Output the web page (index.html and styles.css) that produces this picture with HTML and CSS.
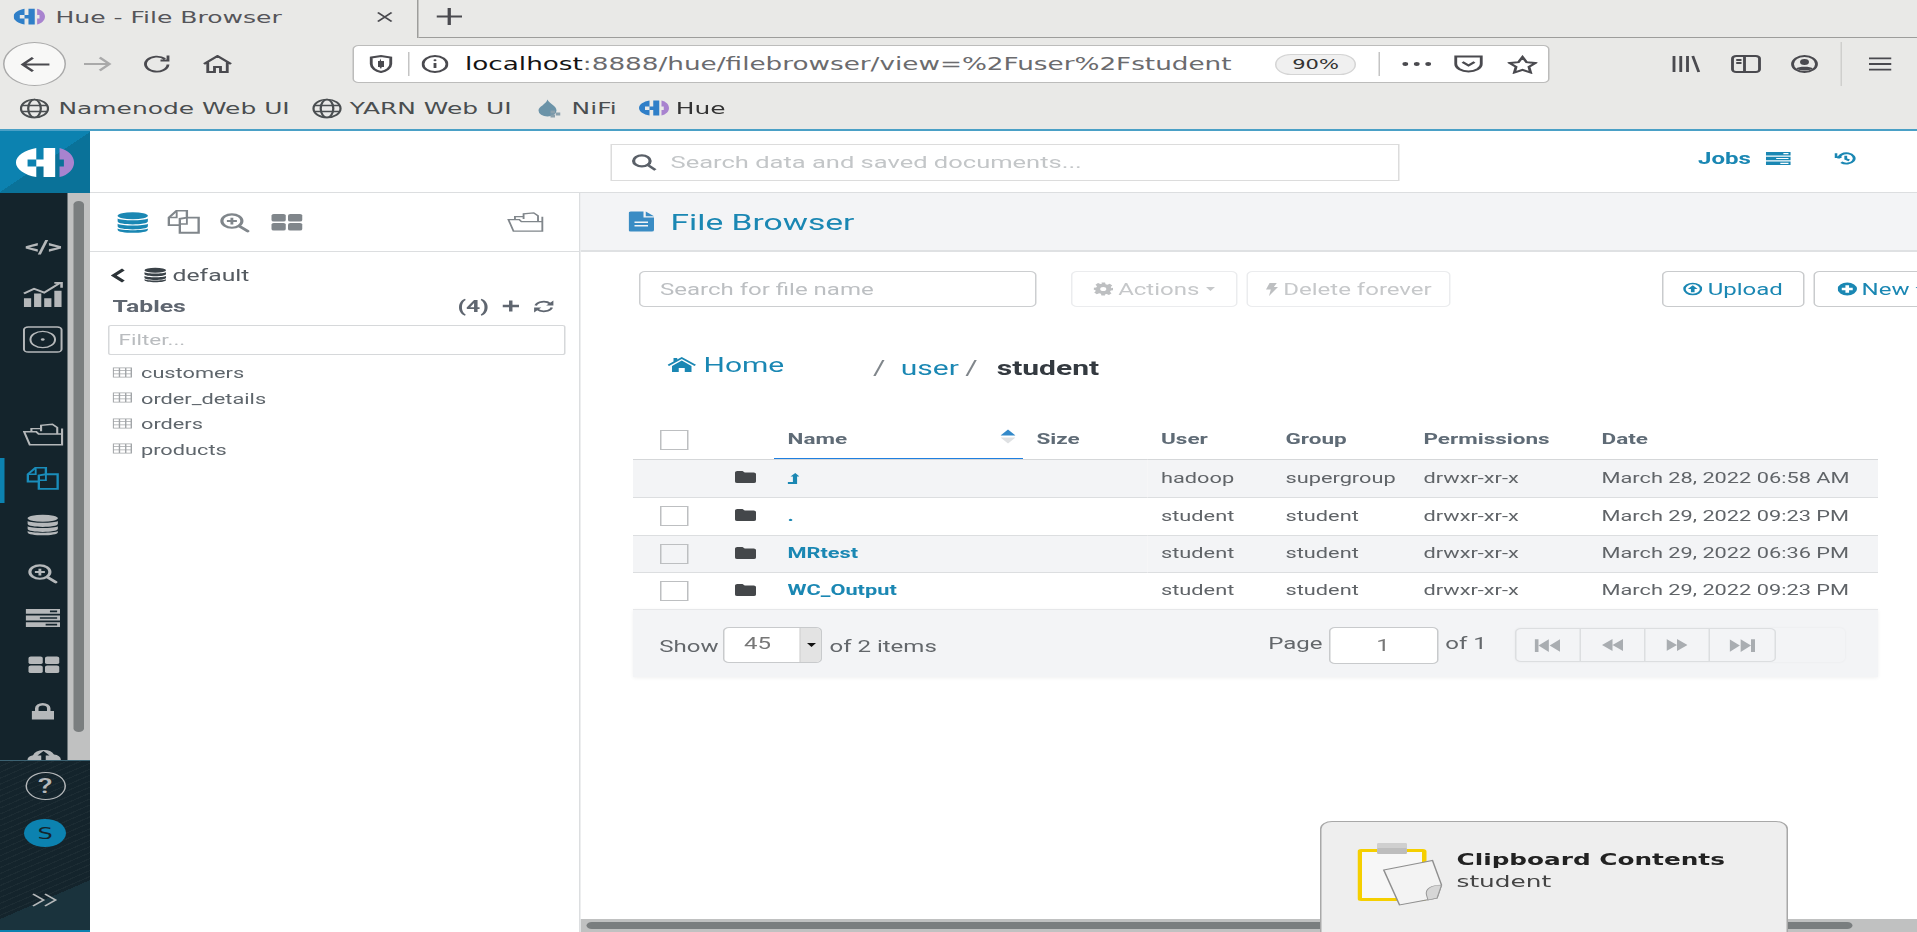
FILE: index.html
```html
<!DOCTYPE html>
<html lang="en">
<head>
  <meta charset="UTF-8">
  <title>Hue - File Browser</title>
  <link rel="stylesheet" href="styles.css">
</head>
<body>

  <svg class="defs" aria-hidden="true">
    <symbol id="i-hue" viewBox="0 0 40 32">
      <path class="hue-a" d="M14 1C6 3 0 9 0 16s6 13 14 15V20H8v-7h6zM19 1h8v30h-8V20h-5v-7h5z"/>
      <path class="hue-b" d="M30 1c6 2 10 8 10 15s-4 13-10 15V20h3v-7h-3z"/>
    </symbol>
    <symbol id="i-db" viewBox="0 0 20 20">
      <ellipse cx="10" cy="3.6" rx="9.6" ry="3.4" fill="currentColor"/>
      <path fill="currentColor" d="M.4 6.2c2 2.2 17.200 2.200 19.200 0v2.600c0 4-19.200 4-19.200 0zM.4 11.200c2 2.200 17.200 2.200 19.200 0v2.400c0 4-19.200 4-19.200 0zM.4 15.800c2 2.200 17.200 2.200 19.200 0v1c0 4-19.200 4-19.200 0z"/>
    </symbol>
    <symbol id="i-docs" viewBox="0 1 22 19" preserveAspectRatio="none">
      <path fill="none" stroke="currentColor" stroke-width="1.500" d="M8 13H1.500V7L6.500 1.500H13V7M8.500 13V8L13 7H20.500V19H8.500z"/>
      <path fill="none" stroke="currentColor" stroke-width="1.200" d="M6.500 2v5H1.500M13 7v5H8.500"/>
    </symbol>
    <symbol id="i-zoom" viewBox="0 0 22 20">
      <circle cx="9" cy="8.500" r="7" fill="none" stroke="currentColor" stroke-width="2.200"/>
      <path fill="none" stroke="currentColor" stroke-width="2" d="M5.500 8.500h7M9 5v7"/>
      <path fill="none" stroke="currentColor" stroke-width="2.600" stroke-linecap="round" d="M14.500 14l5.500 5"/>
    </symbol>
    <symbol id="i-grid" viewBox="0 0 22 18">
      <rect x="1" y="1" width="9.500" height="7.500" rx="1.500" fill="currentColor"/>
      <rect x="12" y="1" width="9.500" height="7.500" rx="1.500" fill="currentColor"/>
      <rect x="1" y="10" width="9.500" height="7.500" rx="1.500" fill="currentColor"/>
      <rect x="12" y="10" width="9.500" height="7.500" rx="1.500" fill="currentColor"/>
    </symbol>
    <symbol id="i-folders" viewBox="0 0 26 22">
      <path fill="none" stroke="currentColor" stroke-width="1.300" d="M4.500 20.500L1 8.500h7.500l1.500 2h14.500v10zM5.500 8V5.500h6V8M11.500 8V2.500l7-1 3 3V10M24.500 10V5.500"/>
    </symbol>
    <symbol id="i-chart" viewBox="0 0 28 28">
      <path fill="none" stroke="currentColor" stroke-width="1.800" d="M1 13l7-5 7 4L26 2M22 2h5v5"/>
      <path fill="currentColor" d="M1 18h5v9H1zM8 13h5v14H8zM15 18h5v9h-5zM22 10h5v17h-5z"/>
    </symbol>
    <symbol id="i-disc" viewBox="0 0 28 28">
      <rect x="1" y="1" width="26" height="26" rx="3" fill="none" stroke="currentColor" stroke-width="1.400"/>
      <circle cx="14" cy="14" r="8.500" fill="none" stroke="currentColor" stroke-width="1.400"/>
      <circle cx="14" cy="14" r="1.300" fill="currentColor"/>
    </symbol>
    <symbol id="i-jobs" viewBox="0 0 24 19">
      <path fill="currentColor" fill-rule="evenodd" d="M0 0h24v5H0zM17 1.600v1.800h5V1.600zM0 7h24v5H0zM10 8.600v1.800h12V8.600zM0 14h24v5H0zM14 15.600v1.800h8v-1.800z"/>
    </symbol>
    <symbol id="i-lock" viewBox="0 0 16 18">
      <path fill="currentColor" d="M0 9h2.500V6a5.500 5.500 0 0 1 11 0v3H16v9H0zM5 9h6V6a3 3 0 0 0-6 0z"/>
    </symbol>
    <symbol id="i-cloud" viewBox="0 0 24 18">
      <path fill="currentColor" fill-rule="evenodd" d="M6 17a5 5 0 0 1-1-9.800A7.500 7.500 0 0 1 19 6.500 5.300 5.300 0 0 1 19 17zM12 3L8 7.500h2.500V12h3V7.500H16z"/>
    </symbol>
    <symbol id="i-file" viewBox="0 0 17 20">
      <path fill="currentColor" d="M0 1.500A1.500 1.500 0 0 1 1.500 0H10v6h7v12.500a1.500 1.500 0 0 1-1.500 1.500h-14A1.500 1.500 0 0 1 0 18.500zM11.500 0L17 4.800h-5.500zM4 10v1.500h9V10zM4 13.500V15h9v-1.500z" fill-rule="evenodd"/>
    </symbol>
    <symbol id="i-home" viewBox="0 0 19 15">
      <path fill="currentColor" d="M9.500 0l9.500 7.800-1 1.200-8.500-7L1 9 0 7.800 4 4.500V1h2.500v1.500zM3 9l6.500-5.500L16 9v6h-4.500v-4h-4v4H3z"/>
    </symbol>
    <symbol id="i-gear" viewBox="0 0 16 16">
      <path fill="currentColor" fill-rule="evenodd" d="M6.500 0h3l.4 2.200 1.500.7 1.900-1.300 2.100 2.100-1.300 1.900.7 1.500L16 6.500v3l-1.800.4-.7 1.500 1.300 1.900-2.100 2.100-1.900-1.300-1.500.7L9.500 16h-3l-.4-2.100-1.500-.7-1.900 1.300-2.100-2.100 1.300-1.900-.7-1.500L0 9.500v-3l2.200-.4.700-1.500L1.600 2.700l2.100-2.100 1.900 1.300 1.500-.7zM8 5.500a2.500 2.500 0 1 0 0 5 2.500 2.500 0 0 0 0-5z"/>
    </symbol>
    <symbol id="i-bolt" viewBox="0 0 10 16">
      <path fill="currentColor" d="M3 0h6L6.500 5H10L2.500 16l1.500-8H0z"/>
    </symbol>
    <symbol id="i-upload" viewBox="0 0 16 16">
      <circle cx="8" cy="8" r="6.800" fill="none" stroke="currentColor" stroke-width="2"/>
      <path fill="currentColor" d="M8 3.500L12 8H9.500v4h-3V8H4z"/>
    </symbol>
    <symbol id="i-plus" viewBox="0 0 16 16">
      <path fill="currentColor" fill-rule="evenodd" d="M8 0a8 8 0 1 1 0 16A8 8 0 0 1 8 0zM6.500 3.500V6.500h-3v3h3v3h3v-3h3v-3h-3v-3z"/>
    </symbol>
    <symbol id="i-folder" viewBox="0 0 14 12">
      <path fill="currentColor" d="M0 1.500A1.500 1.500 0 0 1 1.500 0h3.500l1.500 1.500h6A1.500 1.500 0 0 1 14 3v7.500a1.500 1.500 0 0 1-1.500 1.500h-11A1.500 1.500 0 0 1 0 10.500z"/>
    </symbol>
    <symbol id="i-up" viewBox="0 0 10 14">
      <path fill="currentColor" d="M6.500 0L10 4.500H8V14H0v-2.500h4.500v-7h-2z"/>
    </symbol>
    <symbol id="i-first" viewBox="0 0 16 12">
      <path fill="currentColor" d="M0 0h2.500v12H0zM9 0v12L2.500 6zM16 0v12L9.500 6z"/>
    </symbol>
    <symbol id="i-prev" viewBox="0 0 14 12">
      <path fill="currentColor" d="M7 0v12L0 6zM14 0v12L7 6z"/>
    </symbol>
    <symbol id="i-next" viewBox="0 0 14 12">
      <path fill="currentColor" d="M0 0v12l7-6zM7 0v12l7-6z"/>
    </symbol>
    <symbol id="i-last" viewBox="0 0 16 12">
      <path fill="currentColor" d="M0 0v12l6.500-6zM7 0v12l6.500-6zM13.500 0H16v12h-2.500z"/>
    </symbol>
    <symbol id="i-globe" viewBox="0 0 20 20">
      <g fill="none" stroke="currentColor" stroke-width="1.500">
        <circle cx="10" cy="10" r="9"/>
        <ellipse cx="10" cy="10" rx="4.200" ry="9"/>
        <path d="M1.500 7h17M1.500 13h17"/>
      </g>
    </symbol>
    <symbol id="i-table" viewBox="0 0 14 11">
      <path fill="none" stroke="currentColor" d="M.5.500h13v10H.5zM.5 3.500h13M.5 7h13M5 .5v10M9.500.5v10"/>
    </symbol>
  </svg>

  <div class="screen">

    <!-- browser chrome -->
    <div class="tabstrip">
      <div class="tab">
        <svg class="tab-icon"><use href="#i-hue"/></svg>
        <span class="tab-title">Hue - File Browser</span>
        <svg class="tab-close" viewBox="0 0 12 12"><path d="M1 1l10 10M11 1L1 11"/></svg>
      </div>
      <svg class="tab-new" viewBox="0 0 14 14"><path d="M7 0v14M0 7h14"/></svg>
    </div>

    <div class="navbar">
      <div class="nav-back">
        <svg viewBox="0 0 20 16"><path d="M19 8H2M8.500 1.500L2 8l6.500 6.500"/></svg>
      </div>
      <svg class="nav-btn nav-forward" viewBox="0 0 20 16"><path d="M1 8h17M11.500 1.500L18 8l-6.500 6.500"/></svg>
      <svg class="nav-btn nav-reload" viewBox="0 0 20 18"><path d="M17 9.500A7.500 7.500 0 1 1 15 4M17 .5v5h-5"/></svg>
      <svg class="nav-btn nav-home" viewBox="0 0 20 18"><path d="M1 9l9-8 9 8M3.500 7.500V17h4.500v-5h4v5h4.500V7.500"/></svg>

      <div class="urlbar">
        <svg class="url-shield" viewBox="0 0 16 18"><path d="M1.500 2.500L8 1l6.500 1.500V9c0 4-3 7-6.500 8-3.500-1-6.500-4-6.500-8z"/><path class="solid" d="M8 3.500v5h-1V6zM6 6h4v6H8.500l-.5 2-1-2H6z"/></svg>
        <span class="url-sep"></span>
        <svg class="url-info" viewBox="0 0 18 18"><circle cx="9" cy="9" r="8"/><path d="M9 8v5"/><circle class="solid" cx="9" cy="5.200" r="1"/></svg>
        <div class="url-text"><span class="url-host">localhost</span>:8888/hue/filebrowser/view=%2Fuser%2Fstudent</div>
        <span class="url-zoom">90%</span>
        <span class="url-sep url-sep-right"></span>
        <svg class="url-dots" viewBox="0 0 22 6"><circle cx="3" cy="3" r="2"/><circle cx="11" cy="3" r="2"/><circle cx="19" cy="3" r="2"/></svg>
        <svg class="url-pocket" viewBox="0 0 20 18"><path d="M1.500 1.500h17V9a8.500 7.500 0 0 1-17 0z"/><path d="M6 7l4 3.500L14 7"/></svg>
        <svg class="url-star" viewBox="0 0 20 18"><path d="M10 1.500l2.700 5.200 6 .8-4.400 3.900 1.100 5.600L10 14.300 4.600 17l1.100-5.600L1.300 7.500l6-.8z"/></svg>
      </div>

      <svg class="nav-btn nav-library" viewBox="0 0 20 18"><path d="M2 1v16M6.500 1v16M11 1v16M14.500 1l4 16"/></svg>
      <svg class="nav-btn nav-side" viewBox="0 0 20 18"><rect x="1" y="1" width="18" height="16" rx="2.500"/><path d="M9 1v16M3.500 5H7M3.500 8H7"/></svg>
      <svg class="nav-btn nav-profile" viewBox="0 0 18 18"><circle cx="9" cy="9" r="8"/><circle class="solid" cx="9" cy="7" r="3"/><path class="solid" d="M3.500 13.500c1-2.500 10-2.500 11 0-2 2.500-9 2.500-11 0z"/></svg>
      <span class="nav-sep"></span>
      <svg class="nav-btn nav-menu" viewBox="0 0 16 16"><path d="M0 2h16M0 8h16M0 14h16"/></svg>
    </div>

    <div class="bookmarks">
      <svg class="bm-globe"><use href="#i-globe"/></svg>
      <span class="bm-label bm-name">Namenode Web UI</span>
      <svg class="bm-globe bm-next"><use href="#i-globe"/></svg>
      <span class="bm-label bm-yarn">YARN Web UI</span>
      <svg class="bm-nifi" viewBox="0 0 16 18"><path d="M7 0c1 4 6 6 6 11a6 6 0 0 1-12 0C1 7 6 5 7 0z"/><path class="bm-nifi-sq" d="M9 11h3v3H9zM12.500 13h3v3h-3zM9 15h3v3H9z"/></svg>
      <span class="bm-label bm-nifi-text">NiFi</span>
      <svg class="bm-hue"><use href="#i-hue"/></svg>
      <span class="bm-label bm-hue-text">Hue</span>
    </div>

    <!-- hue app -->
    <div class="app">
      <aside class="rail">
        <div class="rail-logo">
          <svg class="rail-logo-mark"><use href="#i-hue"/></svg>
        </div>
        <div class="rail-middle">
          <div class="rail-icons">
            <span class="rail-code">&lt;/&gt;</span>
            <svg class="ri ri-chart"><use href="#i-chart"/></svg>
            <svg class="ri ri-disc"><use href="#i-disc"/></svg>
            <svg class="ri ri-folders"><use href="#i-folders"/></svg>
            <div class="ri-active"><svg class="ri ri-docs"><use href="#i-docs"/></svg></div>
            <svg class="ri ri-db"><use href="#i-db"/></svg>
            <svg class="ri ri-zoom"><use href="#i-zoom"/></svg>
            <svg class="ri ri-jobs"><use href="#i-jobs"/></svg>
            <svg class="ri ri-grid"><use href="#i-grid"/></svg>
            <svg class="ri ri-lock"><use href="#i-lock"/></svg>
            <svg class="ri ri-cloud"><use href="#i-cloud"/></svg>
          </div>
          <div class="rail-scroll"><div class="rail-thumb"></div></div>
        </div>
        <div class="rail-foot">
          <div class="rail-help">?</div>
          <div class="rail-user">S</div>
          <svg class="rail-expand" viewBox="0 0 18 14"><path d="M1 1l7 6-7 6M9 1l7 6-7 6"/></svg>
        </div>
      </aside>

      <div class="main">
        <header class="topbar">
          <div class="global-search">
            <svg class="global-search-icon" viewBox="0 0 16 16"><circle cx="6.500" cy="6.500" r="5.200"/><path d="M10.500 10.500l4.500 4.500"/></svg>
            <span class="global-search-text">Search data and saved documents...</span>
          </div>
          <span class="jobs-link">Jobs</span>
          <svg class="jobs-icon"><use href="#i-jobs"/></svg>
          <svg class="history-icon" viewBox="0 0 16 16"><path d="M3 8a5.500 5.500 0 1 1 1.800 4M1 2.500v4h4M8 5v3.500l2.500 1.500"/></svg>
        </header>

        <div class="workarea">
          <section class="panel">
            <div class="panel-tabs">
              <svg class="pt pt-db"><use href="#i-db"/></svg>
              <svg class="pt pt-docs"><use href="#i-docs"/></svg>
              <svg class="pt pt-zoom"><use href="#i-zoom"/></svg>
              <svg class="pt pt-grid"><use href="#i-grid"/></svg>
              <svg class="pt pt-folders"><use href="#i-folders"/></svg>
            </div>
            <div class="panel-body">
              <div class="db-line">
                <svg class="db-back" viewBox="0 0 10 14"><path d="M8.500 1.500L2.500 7l6 5.500"/></svg>
                <svg class="db-icon"><use href="#i-db"/></svg>
                <span>default</span>
              </div>
              <div class="tables-head">
                <span class="tables-title">Tables</span>
                <span class="tables-count">(4)</span>
                <svg class="tables-add" viewBox="0 0 12 12"><path d="M6 0v12M0 6h12"/></svg>
                <svg class="tables-refresh" viewBox="0 0 14 12"><path d="M2 5a5 4.500 0 0 1 9-1.500M12 7a5 4.500 0 0 1-9 1.500"/><path class="solid" d="M13 .5V5H8.500zM1 11.500V7h4.500z"/></svg>
              </div>
              <div class="filter">Filter...</div>
              <ul class="table-list">
                <li><svg><use href="#i-table"/></svg>customers</li>
                <li><svg><use href="#i-table"/></svg>order_details</li>
                <li><svg><use href="#i-table"/></svg>orders</li>
                <li><svg><use href="#i-table"/></svg>products</li>
              </ul>
            </div>
          </section>

          <section class="content">
            <div class="page-head">
              <svg class="page-icon"><use href="#i-file"/></svg>
              <h1>File Browser</h1>
            </div>

            <div class="content-body">
              <div class="toolbar">
                <div class="file-search">Search for file name</div>
                <div class="btn btn-off btn-actions"><svg><use href="#i-gear"/></svg>Actions<i class="caret"></i></div>
                <div class="btn btn-off btn-delete"><svg class="bolt"><use href="#i-bolt"/></svg>Delete forever</div>
                <div class="btn btn-upload"><svg><use href="#i-upload"/></svg>Upload</div>
                <div class="btn btn-new"><svg><use href="#i-plus"/></svg>New<i class="caret"></i></div>
              </div>

              <div class="crumbs">
                <svg class="crumb-home-icon"><use href="#i-home"/></svg>
                <span class="crumb-home">Home</span>
                <span class="crumb-sep crumb-sep-first">/</span>
                <span class="crumb-user">user</span>
                <span class="crumb-sep">/</span>
                <span class="crumb-current">student</span>
              </div>

              <table class="files">
                <colgroup>
                  <col class="c-check"><col class="c-icon"><col class="c-name"><col class="c-size">
                  <col class="c-user"><col class="c-group"><col class="c-perm"><col class="c-date">
                </colgroup>
                <thead>
                  <tr>
                    <th class="cell-check"><i class="check"></i></th>
                    <th></th>
                    <th class="th-name">Name
                      <svg class="sort" viewBox="0 0 10 14"><path class="sort-up" d="M5 0l5 6H0z"/><path class="sort-down" d="M5 14l-5-6h10z"/></svg>
                    </th>
                    <th>Size</th>
                    <th>User</th>
                    <th>Group</th>
                    <th>Permissions</th>
                    <th>Date</th>
                  </tr>
                </thead>
                <tbody>
                  <tr class="odd r38">
                    <td></td>
                    <td class="cell-folder"><svg><use href="#i-folder"/></svg></td>
                    <td class="cell-name"><svg class="up-icon"><use href="#i-up"/></svg></td>
                    <td></td>
                    <td>hadoop</td>
                    <td>supergroup</td>
                    <td>drwxr-xr-x</td>
                    <td>March 28, 2022 06:58 AM</td>
                  </tr>
                  <tr class="r38">
                    <td class="cell-check"><i class="check"></i></td>
                    <td class="cell-folder"><svg><use href="#i-folder"/></svg></td>
                    <td class="cell-name">.</td>
                    <td></td>
                    <td>student</td>
                    <td>student</td>
                    <td>drwxr-xr-x</td>
                    <td>March 29, 2022 09:23 PM</td>
                  </tr>
                  <tr class="odd r37">
                    <td class="cell-check"><i class="check"></i></td>
                    <td class="cell-folder"><svg><use href="#i-folder"/></svg></td>
                    <td class="cell-name">MRtest</td>
                    <td></td>
                    <td>student</td>
                    <td>student</td>
                    <td>drwxr-xr-x</td>
                    <td>March 29, 2022 06:36 PM</td>
                  </tr>
                  <tr class="r37">
                    <td class="cell-check"><i class="check"></i></td>
                    <td class="cell-folder"><svg><use href="#i-folder"/></svg></td>
                    <td class="cell-name">WC_Output</td>
                    <td></td>
                    <td>student</td>
                    <td>student</td>
                    <td>drwxr-xr-x</td>
                    <td>March 29, 2022 09:23 PM</td>
                  </tr>
                </tbody>
              </table>

              <div class="pager">
                <span class="pager-show">Show</span>
                <div class="pager-select"><span>45</span><b><i class="caret caret-dark"></i></b></div>
                <span class="pager-items">of 2 items</span>
                <span class="pager-page">Page</span>
                <div class="pager-input">1</div>
                <span class="pager-of">of 1</span>
                <div class="pager-wrap">
                  <div class="pager-buttons">
                    <span><svg class="p-wide"><use href="#i-first"/></svg></span>
                    <span><svg class="p-narrow"><use href="#i-prev"/></svg></span>
                    <span><svg class="p-narrow"><use href="#i-next"/></svg></span>
                    <span><svg class="p-wide"><use href="#i-last"/></svg></span>
                  </div>
                </div>
              </div>
            </div>

            <div class="h-scroll"><div class="h-thumb"></div></div>
          </section>
        </div>
      </div>
    </div>

    <!-- desktop notification, sits over the page -->
    <div class="toast">
      <svg class="toast-icon" viewBox="0 0 57 63">
        <rect x="1.500" y="7.500" width="43" height="49" rx="1" fill="#f7f7f7" stroke="#f5cf00" stroke-width="3"/>
        <rect x="13" y="0" width="20" height="6" rx="1" fill="#cfcfcf"/>
        <rect x="13" y="5" width="20" height="6" rx="1" fill="#bdbdbd"/>
        <path d="M17.500 27L50 17.500 56 42 53 55 28 62z" fill="#f3f3f3" stroke="#8f8f8f"/>
        <path d="M46 52c-1-6 3-10 10-10l-3 13-6 2z" fill="#d6d6d6" stroke="#9a9a9a" stroke-width=".7"/>
      </svg>
      <div class="toast-text">
        <div class="toast-title">Clipboard Contents</div>
        <div class="toast-body">student</div>
      </div>
    </div>

  </div>

</body>
</html>
```

FILE: styles.css
```css
:root {
  --blue: #1a87b3;
  --chrome: #e9e9e7;
  --chrome-ink: #4a4a4f;
  --rail: #14242c;
  --rail-ink: #b5b8ba;
  --soft: #f3f4f6;
  --line: #dcdee0;
  --text: #5f6368;
}

* {
  box-sizing: border-box;
}

html, body {
  margin: 0;
  padding: 0;
  height: 100%;
  overflow: hidden;
  background: #fff;
}

.defs {
  position: absolute;
  width: 0;
  height: 0;
}

/* the whole capture is stretched wide, so lay out at 1278 and stretch by 1.5 */
.screen {
  position: relative;
  width: 1278px;
  height: 932px;
  display: flex;
  flex-direction: column;
  overflow: hidden;
  transform: scaleX(1.5);
  transform-origin: 0 0;
  font-family: Roboto, sans-serif;
  font-size: 14px;
  color: var(--text);
}

svg {
  display: block;
  flex: none;
}

.hue-a { fill: var(--hue-a, #2f7fc8); }
.hue-b { fill: #a883cf; }

/* ---------- browser chrome ---------- */
.tabstrip {
  height: 38px;
  flex: none;
  display: flex;
  align-items: center;
  background: var(--chrome);
  border-bottom: 1px solid #9d9d9b;
  font-family: "DejaVu Sans", sans-serif;
}
.tab {
  width: 279px;
  height: 38px;
  flex: none;
  display: flex;
  align-items: center;
  padding: 0 0 4px 9px;
  background: var(--chrome);
  border-right: 1px solid #9d9d9b;
}
.tab-icon {
  width: 21px;
  height: 17px;
}
.tab-title {
  margin-left: 7px;
  font-size: 16.700px;
  color: #55555a;
  white-space: nowrap;
}
.tab-close {
  width: 11px;
  height: 14px;
  margin-left: auto;
  margin-right: 16px;
  fill: none;
  stroke: #4a4a4f;
  stroke-width: 1.6;
}
.tab-new {
  width: 17px;
  height: 19px;
  margin: -4px 0 0 12px;
  fill: none;
  stroke: #4a4a4f;
  stroke-width: 1.8;
}

.navbar {
  height: 48px;
  flex: none;
  display: flex;
  align-items: center;
  padding-top: 4px;
  background: var(--chrome);
  font-family: "DejaVu Sans", sans-serif;
}
.navbar svg {
  fill: none;
  stroke: #4a4a4f;
  stroke-width: 1.9;
}
.navbar svg .solid {
  fill: #4a4a4f;
  stroke: none;
}
.nav-back {
  width: 42px;
  height: 44px;
  margin-left: 2px;
  display: flex;
  align-items: center;
  justify-content: center;
  background: #f8f8f7;
  border: 1px solid #aaa;
  border-radius: 50%;
  flex: none;
}
.nav-back svg {
  width: 21px;
  height: 17px;
}
.nav-btn {
  width: 20px;
  height: 18px;
}
.nav-forward {
  margin-left: 11px;
  opacity: .4;
}
.nav-reload { margin-left: 20px; }
.nav-home { margin-left: 20px; }
.urlbar {
  width: 798px;
  height: 38px;
  margin-left: 80px;
  display: flex;
  align-items: center;
  flex: none;
  background: #fff;
  border: 1px solid #bcbcbb;
  border-radius: 4px;
}
.url-shield {
  width: 16px;
  height: 18px;
  margin-left: 10px;
}
.url-sep {
  width: 1px;
  height: 24px;
  margin-left: 10px;
  background: #c4c4c4;
  flex: none;
}
.url-info {
  width: 18px;
  height: 18px;
  margin-left: 8px;
}
.url-text {
  margin-left: 11px;
  width: 540px;
  flex: none;
  font-size: 17.500px;
  color: #6b6b6e;
  white-space: nowrap;
}
.url-host {
  color: #141414;
}
.url-zoom {
  width: 54px;
  height: 21px;
  flex: none;
  display: flex;
  align-items: center;
  justify-content: center;
  font-size: 14px;
  color: #333;
  background: #f0f0f0;
  border: 1px solid #d4d4d4;
  border-radius: 11px;
}
.url-sep-right { margin-left: 15px; }
.url-dots {
  width: 21px;
  height: 6px;
  margin-left: 14px;
}
.navbar .url-dots {
  fill: #4a4a4f;
  stroke: none;
}
.url-pocket {
  width: 20px;
  height: 18px;
  margin-left: 14px;
}
.url-star {
  width: 20px;
  height: 19px;
  margin-left: 16px;
}
.nav-library { margin-left: 81px; }
.nav-side { margin-left: 20px; }
.nav-profile { margin-left: 19px; }
.nav-sep {
  width: 1px;
  height: 44px;
  margin-left: 14px;
  background: #cfcfcd;
  flex: none;
}
.nav-menu {
  width: 15px;
  height: 16px;
  margin-left: 18px;
}

.bookmarks {
  height: 45px;
  flex: none;
  display: flex;
  align-items: center;
  padding-top: 1px;
  background: var(--chrome);
  border-bottom: 2px solid #4aa0c6;
  font-family: "DejaVu Sans", sans-serif;
  font-size: 16.600px;
  color: #4a4e50;
}
.bm-globe {
  width: 20px;
  height: 21px;
  margin-left: 13px;
  color: #4a4e50;
}
.bm-label {
  margin-left: 6px;
  white-space: nowrap;
}
.bm-next { margin-left: 15px; }
.bm-yarn { margin-left: 5px; }
.bm-nifi {
  width: 16px;
  height: 19px;
  margin-left: 16.500px;
  fill: #6b93a8;
}
.bm-nifi-sq { fill: #8aa0ac; }
.bm-nifi-text { margin-left: 7.500px; }
.bm-hue {
  width: 20px;
  height: 16px;
  margin-left: 14.500px;
}
.bm-hue-text { margin-left: 5px; color: #333; }

/* ---------- hue app ---------- */
.app {
  flex: 1;
  min-height: 0;
  display: flex;
}

.rail {
  width: 60px;
  flex: none;
  display: flex;
  flex-direction: column;
  background: var(--rail);
}
.rail-logo {
  --hue-a: #fff;
  height: 62px;
  flex: none;
  display: flex;
  align-items: center;
  justify-content: center;
  background: linear-gradient(135deg, #0c82b0 50%, #0a7299 50%);
}
.rail-logo-mark {
  width: 40px;
  height: 31px;
}
.rail-middle {
  flex: 1;
  min-height: 0;
  display: flex;
  overflow: hidden;
}
.rail-icons {
  width: 45px;
  flex: none;
  display: flex;
  flex-direction: column;
  align-items: center;
  color: var(--rail-ink);
  padding-left: 12px;
}
.rail-code {
  margin-top: 40px;
  font-weight: 700;
  font-size: 19px;
  line-height: 28px;
  letter-spacing: -1px;
  white-space: nowrap;
}
.ri {
  width: 27px;
  height: 27px;
}
.ri-chart { margin-top: 20px; }
.ri-disc { margin-top: 18px; }
.ri-folders { margin-top: 69px; height: 25px; width: 28px; }
.ri-active {
  position: relative;
  margin-top: 20px;
  height: 23px;
}
.ri-active::before {
  content: '';
  position: absolute;
  left: -17px;
  top: -9px;
  width: 3px;
  height: 45px;
  background: #0c82b0;
}
.ri-docs {
  width: 23px;
  height: 23px;
  color: #1a8dbb;
}
.ri-db { margin-top: 23px; width: 21px; height: 24px; }
.ri-zoom { margin-top: 26px; width: 21px; height: 21px; }
.ri-jobs { margin-top: 24px; width: 23px; height: 20px; }
.ri-grid { margin-top: 27px; width: 22px; height: 19px; }
.ri-lock { margin-top: 28px; width: 15px; height: 18px; }
.ri-cloud { margin-top: 28px; width: 24px; height: 18px; }
.rail-scroll {
  width: 15px;
  flex: none;
  position: relative;
  background: #c0c1c1;
}
.rail-thumb {
  width: 7px;
  height: 531px;
  margin: 8px 0 0 4px;
  background: #7a7e7f;
  border-radius: 4px;
}
.rail-foot {
  height: 172px;
  flex: none;
  display: flex;
  flex-direction: column;
  align-items: center;
  border-top: 1px solid #3c6272;
  border-bottom: 2px solid #0c82b0;
  background:
    linear-gradient(147deg, transparent 76%, #1a333d 76%),
    repeating-linear-gradient(147deg, transparent 0 4px, rgba(255,255,255,.035) 4px 5px),
    var(--rail);
}
.rail-help {
  width: 27px;
  height: 28px;
  margin-top: 11px;
  display: flex;
  align-items: center;
  justify-content: center;
  border: 1.500px solid var(--rail-ink);
  border-radius: 50%;
  font-weight: 500;
  font-size: 20px;
  color: var(--rail-ink);
}
.rail-user {
  width: 28px;
  height: 28px;
  margin-top: 19px;
  display: flex;
  align-items: center;
  justify-content: center;
  background: #0c82b0;
  border-radius: 50%;
  font-family: "DejaVu Sans", sans-serif;
  font-size: 16px;
  color: #14242c;
}
.rail-expand {
  width: 18px;
  height: 20px;
  margin-top: 43px;
  fill: none;
  stroke: var(--rail-ink);
  stroke-width: 1.5;
}

.main {
  flex: 1;
  min-width: 0;
  display: flex;
  flex-direction: column;
}
.topbar {
  height: 62px;
  flex: none;
  display: flex;
  align-items: center;
  background: #fff;
  border-bottom: 1px solid var(--line);
}
.global-search {
  width: 526px;
  height: 37px;
  margin-left: 347px;
  margin-top: 1px;
  display: flex;
  align-items: center;
  border: 1px solid #dcdcdc;
  padding-left: 13px;
}
.global-search-icon {
  width: 17px;
  height: 17px;
  fill: none;
  stroke: #5a6068;
  stroke-width: 2;
}
.global-search-text {
  margin-left: 9px;
  font-size: 17px;
  color: #c3c6c8;
  white-space: nowrap;
}
.jobs-link {
  margin-left: 199px;
  margin-top: -6px;
  font-size: 16px;
  font-weight: 700;
  color: var(--blue);
}
.jobs-icon {
  width: 17px;
  height: 13px;
  margin-left: 10px;
  margin-top: -6px;
  color: var(--blue);
}
.history-icon {
  width: 15px;
  height: 15px;
  margin-left: 29px;
  margin-top: -6px;
  fill: none;
  stroke: var(--blue);
  stroke-width: 2;
}

.workarea {
  flex: 1;
  min-height: 0;
  display: flex;
}

/* assist panel */
.panel {
  width: 327px;
  flex: none;
  background: #fff;
  border-right: 1px solid var(--line);
}
.panel-tabs {
  height: 59px;
  display: flex;
  align-items: center;
  border-bottom: 1px solid var(--line);
  color: #80868b;
}
.pt {
  width: 21px;
  height: 21px;
}
.pt-db { margin-left: 18px; color: #1a87b3; }
.pt-docs { margin-left: 12px; width: 23px; height: 24px; }
.pt-zoom { margin-left: 12px; }
.pt-grid { margin-left: 13px; height: 18px; width: 22px; }
.pt-folders { margin-left: 136px; width: 25px; height: 24px; }
.panel-body {
  padding: 0 12px;
}
.db-line {
  height: 24px;
  margin-top: 11px;
  display: flex;
  align-items: center;
  font-size: 16.500px;
  color: #555b61;
}
.db-back {
  width: 11px;
  height: 15px;
  margin-left: 1px;
  fill: none;
  stroke: #2c3338;
  stroke-width: 2.5;
}
.db-icon {
  width: 15px;
  height: 16px;
  margin-left: 12px;
  margin-right: 4px;
  color: #3a4248;
}
.tables-head {
  height: 20px;
  margin-top: 9px;
  display: flex;
  align-items: center;
  font-size: 16.500px;
  font-weight: 700;
  color: #5f6670;
  padding-left: 3px;
}
.tables-count {
  margin-left: auto;
}
.tables-add {
  width: 11px;
  height: 12px;
  margin-left: 9px;
  fill: none;
  stroke: #5f6670;
  stroke-width: 2.5;
}
.tables-refresh {
  width: 15px;
  height: 13px;
  margin-left: 9px;
  margin-right: 4px;
  fill: none;
  stroke: #5f6670;
  stroke-width: 1.6;
}
.tables-refresh .solid {
  fill: #5f6670;
  stroke: none;
}
.filter {
  height: 30px;
  width: 305px;
  margin-top: 9px;
  display: flex;
  align-items: center;
  padding-left: 6px;
  border: 1px solid #d6d8da;
  border-radius: 2px;
  font-size: 15px;
  color: #b9bcbf;
}
.table-list {
  list-style: none;
  margin: 6px 0 0;
  padding: 0;
}
.table-list li {
  height: 25.500px;
  display: flex;
  align-items: center;
  font-size: 14.500px;
  color: #5f666c;
}
.table-list svg {
  width: 13px;
  height: 11px;
  margin-left: 3px;
  margin-right: 6px;
  margin-top: -3px;
  color: #a2a5a8;
}

/* file browser */
.content {
  flex: 1;
  min-width: 0;
  display: flex;
  flex-direction: column;
  overflow: hidden;
}
.page-head {
  height: 59px;
  flex: none;
  display: flex;
  align-items: center;
  background: var(--soft);
  border-bottom: 2px solid #dfe1e3;
}
.page-icon {
  width: 17px;
  height: 21px;
  margin-left: 32px;
  color: #3a8cc4;
}
.page-head h1 {
  margin: 0 0 0 11px;
  font-size: 22.400px;
  font-weight: 400;
  color: var(--blue);
  white-space: nowrap;
}
.content-body {
  flex: 1;
  min-height: 0;
  padding: 19px 0 0 39px;
  position: relative;
}
.toolbar {
  height: 36px;
  display: flex;
  white-space: nowrap;
}
.file-search {
  width: 265px;
  flex: none;
  display: flex;
  align-items: center;
  padding-left: 13px;
  border: 1px solid #ccced0;
  border-radius: 4px;
  font-size: 16px;
  color: #bcbfc2;
}
.btn {
  display: flex;
  align-items: center;
  justify-content: center;
  flex: none;
  font-size: 16px;
  border: 1px solid #c9cbcd;
  border-radius: 4px;
  color: var(--blue);
  background: #fff;
}
.btn svg {
  width: 13px;
  height: 14px;
  margin-right: 3px;
}
.btn .bolt {
  width: 8px;
  height: 15px;
  margin-right: 4px;
}
.btn-off {
  color: #c6c8ca;
  border-color: #ebecee;
}
.btn-off svg {
  color: #bdbfc1;
}
.btn-actions {
  width: 111px;
  margin-left: 23px;
}
.btn-delete {
  width: 136px;
  margin-left: 6px;
}
.btn-upload {
  width: 95px;
  margin-left: 141px;
}
.btn-new {
  width: 90px;
  margin-left: 6px;
}
.caret {
  width: 0;
  height: 0;
  margin-left: 4px;
  border-left: 3.500px solid transparent;
  border-right: 3.500px solid transparent;
  border-top: 4px solid currentColor;
  display: inline-block;
}
.crumbs {
  height: 40px;
  margin-top: 41px;
  display: flex;
  align-items: center;
  font-size: 20px;
  white-space: nowrap;
}
.crumb-home-icon {
  width: 19px;
  height: 15px;
  margin-left: 19px;
  margin-top: -8px;
  color: var(--blue);
}
.crumb-home {
  margin-left: 5px;
  margin-top: -6px;
  width: 53px;
  font-size: 20px;
  color: var(--blue);
}
.crumb-sep {
  width: 6px;
  color: #80868b;
}
.crumb-sep-first {
  margin-left: 60px;
}
.crumb-user {
  margin-left: 12.500px;
  width: 38px;
  margin-right: 5px;
  color: var(--blue);
}
.crumb-current {
  margin-left: 15px;
  font-weight: 700;
  color: #343a40;
}

.files {
  width: 830.700px;
  margin: 31px 0 0 -4.500px;
  border-collapse: collapse;
  table-layout: fixed;
}
.c-check { width: 60px; }
.c-icon { width: 34px; }
.c-name { width: 166px; }
.c-size { width: 83px; }
.c-user { width: 83px; }
.c-group { width: 92px; }
.c-perm { width: 118.700px; }
.c-date { width: 194px; }
.files th,
.files td {
  padding: 0 0 0 9.500px;
  text-align: left;
  white-space: nowrap;
}
.files thead tr {
  height: 40px;
  border-bottom: 1px solid #d5d7d9;
}
.files th {
  font-size: 15px;
  font-weight: 700;
  color: #5f6b76;
}
.files thead .cell-check {
  padding-top: 3px;
}
.th-name {
  position: relative;
  box-shadow: inset 0 -1px 0 #1f7fe0;
}
.sort {
  position: absolute;
  right: 5px;
  top: 10px;
  width: 10px;
  height: 15px;
}
.sort-up { fill: #3389c9; }
.sort-down { fill: #dfe1e3; }
.files tbody tr {
  border-bottom: 1px solid #dcdee0;
}
.files tbody tr:last-child {
  border-bottom: 0;
}
.r38 { height: 38px; }
.r37 { height: 37px; }
.odd {
  background: var(--soft);
}
.files td {
  font-size: 14.500px;
  color: #606468;
}
.files .cell-check,
.files thead .cell-check {
  padding-left: 18px;
}
.check {
  display: block;
  width: 19px;
  height: 20px;
  background: #fff;
  border: 1px solid #bdbfc1;
}
.odd .check {
  background: var(--soft);
}
.files .cell-folder {
  padding-left: 8px;
  padding-bottom: 2px;
  color: #44474a;
}
.cell-folder svg {
  width: 14px;
  height: 12px;
}
.files .cell-name {
  font-weight: 700;
  color: var(--blue);
}
.up-icon {
  width: 8px;
  height: 13px;
}
.pager {
  width: 830.700px;
  height: 68px;
  margin-left: -4.500px;
  padding-top: 3px;
  display: flex;
  align-items: center;
  background: var(--soft);
  border-top: 1px solid #e6e7e9;
  box-shadow: 0 1px 3px rgba(0,0,0,.06);
  font-size: 16px;
  color: #63676b;
  white-space: nowrap;
}
.pager-show {
  margin-left: 18px;
  margin-top: 2px;
  width: 39px;
}
.pager-select {
  width: 66px;
  height: 36px;
  margin-left: 3.500px;
  display: flex;
  background: #fff;
  border: 1px solid #c8cacc;
  border-radius: 4px;
  overflow: hidden;
  color: #777;
}
.pager-select span {
  flex: 1;
  display: flex;
  align-items: center;
  justify-content: center;
  padding-bottom: 3px;
  padding-right: 6px;
}
.pager-select b {
  width: 14px;
  display: flex;
  align-items: center;
  justify-content: center;
  background: #e3e3e3;
  border-left: 1px solid #d8d8d8;
  color: #111;
}
.caret-dark {
  margin: 0;
}
.pager-items {
  margin-left: 5px;
  margin-top: 2px;
  width: 70px;
}
.pager-page {
  margin-left: 222.500px;
  margin-top: -4px;
  width: 35px;
}
.pager-input {
  width: 73px;
  height: 37px;
  margin-left: 5px;
  display: flex;
  align-items: center;
  justify-content: center;
  background: #fff;
  border: 1px solid #c8cacc;
  border-radius: 4px;
  color: #777;
}
.pager-of {
  margin-left: 5px;
  margin-top: -4px;
  width: 26px;
}
.pager-wrap {
  width: 220px;
  height: 34px;
  margin-left: 20px;
  border-radius: 4px;
  box-shadow: 0 0 2px rgba(0,0,0,.06);
}
.pager-buttons {
  width: 174px;
  height: 34px;
  display: flex;
  border: 1px solid #dcdee0;
  border-radius: 4px;
}
.pager-buttons span {
  flex: 1;
  display: flex;
  align-items: center;
  justify-content: center;
  border-left: 1px solid #dcdee0;
  color: #a9adb1;
}
.pager-buttons span:first-child {
  border-left: 0;
}
.p-wide {
  width: 17px;
  height: 13px;
}
.p-narrow {
  width: 14px;
  height: 12px;
}
.h-scroll {
  height: 13px;
  flex: none;
  background: #c0c1c1;
  padding: 3px 0 0 4px;
}
.h-thumb {
  width: 844px;
  height: 7px;
  background: #7a7e7f;
  border-radius: 4px;
}

/* notification */
.toast {
  position: absolute;
  left: 880px;
  top: 821px;
  width: 312px;
  height: 130px;
  display: flex;
  padding: 21px 0 0 24px;
  background: #eee;
  border: 1px solid #a8a8a8;
  border-radius: 8px;
  font-family: "DejaVu Sans", sans-serif;
}
.toast-icon {
  width: 57px;
  height: 63px;
}
.toast-text {
  margin-left: 9px;
  padding-top: 6px;
}
.toast-title {
  font-size: 16.500px;
  font-weight: bold;
  color: #222;
  line-height: 22px;
}
.toast-body {
  font-size: 16.500px;
  color: #444;
  line-height: 22px;
}
```
